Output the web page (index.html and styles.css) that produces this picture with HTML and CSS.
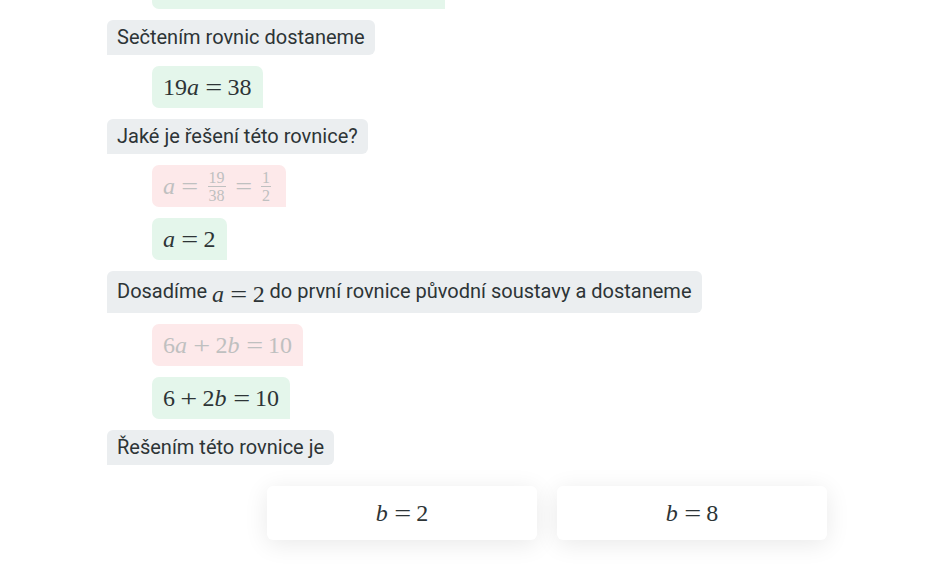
FILE: index.html
```html
<!DOCTYPE html>
<html lang="cs">
<head>
<meta charset="utf-8">
<link rel="stylesheet" href="styles.css">
</head>
<body>
<div class="chat">
  <div class="ans ok cut"><span class="m">&nbsp;</span></div>
  <div class="q">Sečtením rovnic dostaneme</div>
  <div class="ans ok"><span class="m">19<i>a</i><span class="op">=</span>38</span></div>
  <div class="q">Jaké je řešení této rovnice?</div>
  <div class="ans bad"><span class="m"><i>a</i><span class="op">=</span><span class="frac"><span class="num">19</span><span class="den">38</span></span><span class="op">=</span><span class="frac"><span class="num">1</span><span class="den">2</span></span></span></div>
  <div class="ans ok"><span class="m"><i>a</i><span class="op">=</span>2</span></div>
  <div class="q tall">Dosadíme <span class="m"><i>a</i><span class="op">=</span>2</span> do první rovnice původní soustavy a dostaneme</div>
  <div class="ans bad"><span class="m">6<i>a</i><span class="op">+</span>2<i>b</i><span class="op">=</span>10</span></div>
  <div class="ans ok"><span class="m">6<span class="op">+</span>2<i>b</i><span class="op">=</span>10</span></div>
  <div class="q">Řešením této rovnice je</div>
  <div class="choices">
    <button class="card"><span class="m"><i>b</i><span class="op">=</span>2</span></button>
    <button class="card"><span class="m"><i>b</i><span class="op">=</span>8</span></button>
  </div>
</div>
</body>
</html>
```
FILE: styles.css
```css
html, body {
  margin: 0;
  padding: 0;
  background: #ffffff;
}
body {
  font-family: Roboto, "Liberation Sans", sans-serif;
  color: #2d3436;
}
.chat {
  display: flex;
  flex-direction: column;
  align-items: flex-start;
  gap: 11px;
  padding-left: 107px;
  padding-bottom: 40px;
}
.q {
  background: #ebeef0;
  font-size: 20px;
  line-height: 23px;
  padding: 6px 10px;
  border-radius: 6px 6px 6px 0;
}
.q.tall {
  padding: 6px 10px;
  line-height: 28px;
  height: 42px;
  box-sizing: border-box;
}
.ans {
  margin-left: 45px;
  height: 42px;
  box-sizing: border-box;
  padding: 0 11px 0 11px;
  display: flex;
  align-items: center;
  border-radius: 7px 7px 0 7px;
}
.ans.ok {
  background: #e4f6eb;
}
.ans.bad {
  background: #fde9ea;
  color: #bfc0c0;
}
.ans.cut {
  width: 293px;
  margin-top: -33px;
}
.m {
  font-family: "Liberation Serif", "DejaVu Serif", serif;
  font-size: 24px;
  white-space: nowrap;
  display: inline-flex;
  align-items: center;
  line-height: 26px;
  vertical-align: -4px;
}
.m i {
  font-style: italic;
  padding-right: 1px;
}
.op {
  padding: 0 7px;
  display: inline-block;
  transform: scaleX(1.25);
}
.frac {
  display: inline-flex;
  flex-direction: column;
  align-items: center;
  font-size: 16px;
  line-height: 15px;
  padding: 0 4px;
}
.frac .num {
  border-bottom: 1px solid currentColor;
  padding: 0 1px 1px;
}
.frac .den {
  padding-top: 1px;
}
.choices {
  display: flex;
  gap: 20px;
  margin-top: 10px;
  margin-left: 160px;
}
.card {
  width: 270px;
  height: 54px;
  border: none;
  background: #ffffff;
  border-radius: 6px;
  box-shadow: 0 4px 24px rgba(0, 0, 0, 0.09);
  color: #2d3436;
  display: flex;
  align-items: center;
  justify-content: center;
  padding: 0;
  cursor: pointer;
}
```
